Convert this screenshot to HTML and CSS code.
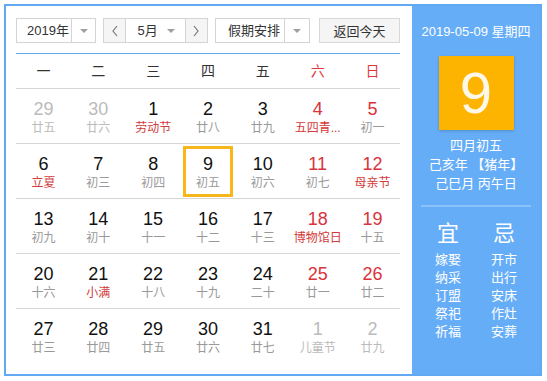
FILE: index.html
```html
<!DOCTYPE html>
<html lang="zh-CN">
<head>
    <meta charset="UTF-8">
    <title>万年历</title>
    <link rel="stylesheet" href="styles.css">
</head>
<body>

<div class="calendar">
    <div class="main">
        <div class="toolbar">
            <div class="select year">
                <span class="label">2019年</span>
                <span class="arrow"><i class="caret"></i></span>
            </div>
            <div class="select month">
                <span class="nav">
                    <svg width="8" height="12" viewBox="0 0 8 12"><polyline points="6,1 2,6 6,11" fill="none" stroke="#777" stroke-width="1.2"/></svg>
                </span>
                <span class="label">5月 <i class="caret"></i></span>
                <span class="nav">
                    <svg width="8" height="12" viewBox="0 0 8 12"><polyline points="2,1 6,6 2,11" fill="none" stroke="#777" stroke-width="1.2"/></svg>
                </span>
            </div>
            <div class="select holiday">
                <span class="label">假期安排</span>
                <span class="arrow"><i class="caret"></i></span>
            </div>
            <button class="today-btn">返回今天</button>
        </div>

        <div class="weekdays">
            <span>一</span><span>二</span><span>三</span><span>四</span><span>五</span>
            <span class="weekend">六</span><span class="weekend">日</span>
        </div>

        <div class="days">
            <div class="day other"><b>29</b><small>廿五</small></div>
            <div class="day other"><b>30</b><small>廿六</small></div>
            <div class="day"><b>1</b><small class="fest">劳动节</small></div>
            <div class="day"><b>2</b><small>廿八</small></div>
            <div class="day"><b>3</b><small>廿九</small></div>
            <div class="day weekend"><b>4</b><small class="fest">五四青...</small></div>
            <div class="day weekend"><b>5</b><small>初一</small></div>

            <div class="day"><b>6</b><small class="fest">立夏</small></div>
            <div class="day"><b>7</b><small>初三</small></div>
            <div class="day"><b>8</b><small>初四</small></div>
            <div class="day today"><b>9</b><small>初五</small></div>
            <div class="day"><b>10</b><small>初六</small></div>
            <div class="day weekend"><b>11</b><small>初七</small></div>
            <div class="day weekend"><b>12</b><small class="fest">母亲节</small></div>

            <div class="day"><b>13</b><small>初九</small></div>
            <div class="day"><b>14</b><small>初十</small></div>
            <div class="day"><b>15</b><small>十一</small></div>
            <div class="day"><b>16</b><small>十二</small></div>
            <div class="day"><b>17</b><small>十三</small></div>
            <div class="day weekend"><b>18</b><small class="fest">博物馆日</small></div>
            <div class="day weekend"><b>19</b><small>十五</small></div>

            <div class="day"><b>20</b><small>十六</small></div>
            <div class="day"><b>21</b><small class="fest">小满</small></div>
            <div class="day"><b>22</b><small>十八</small></div>
            <div class="day"><b>23</b><small>十九</small></div>
            <div class="day"><b>24</b><small>二十</small></div>
            <div class="day weekend"><b>25</b><small>廿一</small></div>
            <div class="day weekend"><b>26</b><small>廿二</small></div>

            <div class="day"><b>27</b><small>廿三</small></div>
            <div class="day"><b>28</b><small>廿四</small></div>
            <div class="day"><b>29</b><small>廿五</small></div>
            <div class="day"><b>30</b><small>廿六</small></div>
            <div class="day"><b>31</b><small>廿七</small></div>
            <div class="day other"><b>1</b><small>儿童节</small></div>
            <div class="day other"><b>2</b><small>廿九</small></div>
        </div>
    </div>

    <div class="side">
        <div class="side-date">2019-05-09 星期四</div>
        <div class="big-day">9</div>
        <div class="lunar">
            <div>四月初五</div>
            <div>己亥年 【猪年】</div>
            <div>己巳月 丙午日</div>
        </div>
        <div class="divider"></div>
        <div class="almanac">
            <div class="col">
                <div class="head">宜</div>
                <div>嫁娶</div>
                <div>纳采</div>
                <div>订盟</div>
                <div>祭祀</div>
                <div>祈福</div>
            </div>
            <div class="col">
                <div class="head">忌</div>
                <div>开市</div>
                <div>出行</div>
                <div>安床</div>
                <div>作灶</div>
                <div>安葬</div>
            </div>
        </div>
    </div>
</div>

</body>
</html>
```

FILE: styles.css
```css
body {
    font-family: "Liberation Sans", "Noto Sans CJK SC", sans-serif;
    background-color: #fff;
    margin: 0;
    padding: 4px;
    color: #333;
}
.calendar {
    width: 538px;
    height: 372px;
    box-sizing: border-box;
    border: 2px solid #62a9f3;
    display: flex;
}
.main {
    width: 406px;
    padding: 12px 12px 0 10px;
    box-sizing: border-box;
}

/* toolbar */
.toolbar {
    display: flex;
    height: 25px;
    margin-bottom: 10px;
}
.select {
    display: flex;
    height: 25px;
    box-sizing: border-box;
    border: 1px solid #d4d4d4;
    font-size: 13px;
    line-height: 23px;
}
.select .label {
    padding-left: 10px;
    box-sizing: border-box;
}
.select .arrow {
    border-left: 1px solid #d4d4d4;
    display: flex;
    align-items: center;
    justify-content: center;
}
.caret {
    display: inline-block;
    width: 0;
    height: 0;
    border-left: 4px solid transparent;
    border-right: 4px solid transparent;
    border-top: 4px solid #a0a0a0;
    vertical-align: middle;
}
.year {
    width: 80px;
    margin-right: 7px;
}
.year .label {
    width: 56px;
}
.year .arrow {
    width: 24px;
}
.month {
    width: 105px;
    margin-right: 7px;
}
.month .nav {
    width: 22px;
    background-color: #f5f5f5;
    display: flex;
    align-items: center;
    justify-content: center;
}
.month .nav:first-child {
    border-right: 1px solid #d4d4d4;
}
.month .nav:last-child {
    border-left: 1px solid #d4d4d4;
}
.month .label {
    width: 59px;
    display: flex;
    align-items: center;
    justify-content: space-between;
    padding: 0 10px 0 11px;
}
.holiday {
    width: 95px;
    margin-right: 9px;
}
.holiday .label {
    width: 70px;
    padding-left: 12px;
}
.holiday .arrow {
    width: 25px;
}
.today-btn {
    width: 81px;
    height: 25px;
    border: 1px solid #d8d8d8;
    background-color: #f5f5f5;
    font-family: inherit;
    font-size: 13px;
    color: #333;
    padding: 0;
    cursor: pointer;
}

/* weekday header */
.weekdays {
    display: grid;
    grid-template-columns: repeat(7, 1fr);
    border-top: 1px solid #62a9f3;
    border-bottom: 1px solid #d6d6d6;
    height: 34px;
    line-height: 34px;
    font-size: 14px;
    text-align: center;
    color: #333;
}
.weekdays .weekend {
    color: #e0383e;
}

/* day grid */
.days {
    display: grid;
    grid-template-columns: repeat(7, 1fr);
}
.day {
    height: 44px;
    padding-top: 10px;
    border-bottom: 1px solid #d6d6d6;
    text-align: center;
}
.day:nth-last-child(-n+7) {
    border-bottom: none;
}
.day b {
    display: block;
    font-weight: normal;
    font-size: 18px;
    line-height: 20px;
    color: #111;
}
.day small {
    display: block;
    font-size: 12px;
    line-height: 18px;
    color: #999;
    white-space: nowrap;
}
.day.weekend b {
    color: #d9333c;
}
.day small.fest {
    color: #d33a3a;
}
.day.other b,
.day.other small {
    color: #bbb;
}
.day.today {
    outline: 3px solid #f6b61c;
    outline-offset: -5px;
}

/* side panel */
.side {
    flex: 1;
    background-color: #66adf8;
    color: #fff;
    text-align: center;
    padding-top: 17px;
}
.side-date {
    font-size: 13px;
    line-height: 18px;
}
.big-day {
    width: 75px;
    height: 74px;
    margin: 15px auto 0;
    background-color: #fdb400;
    box-shadow: 0 1px 3px rgba(0, 0, 0, 0.2);
    color: #fff8e8;
    font-size: 58px;
    line-height: 74px;
}
.lunar {
    margin-top: 6px;
    font-size: 13px;
    line-height: 19px;
}
.divider {
    width: 110px;
    height: 2px;
    margin: 12px auto 0;
    background-color: #8cc2fb;
}
.almanac {
    display: flex;
    justify-content: center;
    gap: 12px;
    margin-top: 13px;
}
.almanac .col {
    width: 44px;
    font-size: 13px;
    line-height: 18px;
}
.almanac .head {
    font-size: 22px;
    line-height: 28px;
    margin-bottom: 3px;
}
```
